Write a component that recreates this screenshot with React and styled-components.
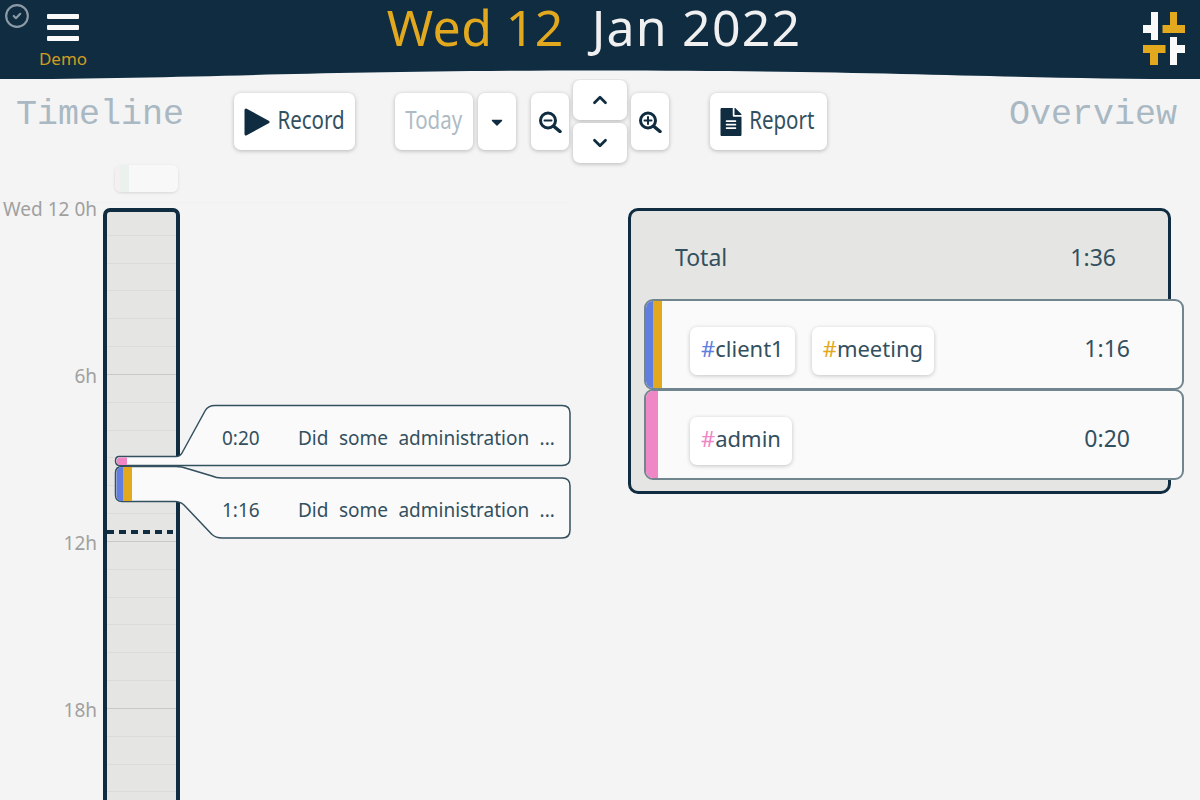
import React from "react";
import styled, { createGlobalStyle } from "styled-components";
import { CircleCheck, ChevronUp, ChevronDown } from "lucide-react";
import { FaCaretDown, FaFileAlt } from "react-icons/fa";

const navy = "#0f2c40";
const gold = "#e2a91f";
const blue = "#5f7ee0";
const pink = "#ef86c6";
const ink = "#33505f";
const sans = `"Noto Sans", "Open Sans", sans-serif`;

const GlobalStyle = createGlobalStyle`
  html, body {
    margin: 0;
    height: 100%;
    background: #f4f4f4;
    font-family: ${sans};
    overflow: hidden;
  }
`;

const Page = styled.div`
  width: 1200px;
  height: 800px;
  overflow: hidden;
`;

const Header = styled.header`
  position: relative;
  height: 79px;
  background: ${navy};
  display: flex;
  justify-content: center;
`;

const Wave = styled.svg`
  position: absolute;
  left: 0;
  bottom: 0;
  width: 1200px;
  height: 10px;
`;

const StatusIcon = styled.span`
  position: absolute;
  left: 4px;
  top: 3px;
  color: #8b9aa5;
  display: flex;
`;

const Menu = styled.div`
  position: absolute;
  left: 39px;
  top: 14px;
  width: 48px;
  display: flex;
  flex-direction: column;
  align-items: center;
`;

const MenuBar = styled.span`
  display: block;
  width: 32px;
  height: 5px;
  margin-bottom: 6px;
  background: #fafafa;
  border-radius: 1px;
`;

const DemoLabel = styled.span`
  margin-top: 1px;
  color: ${gold};
  font-size: 17px;
  line-height: 22px;
  opacity: 0.9;
`;

const Title = styled.h1`
  margin: 0;
  padding-right: 12px;
  font-size: 50px;
  font-weight: 400;
  line-height: 54px;
  letter-spacing: 0.4px;
  color: #f0f0f0;
  display: flex;
  gap: 28px;
`;

const TitleDay = styled.span`
  color: ${gold};
`;

const TitleMonth = styled.span`
  letter-spacing: 1.2px;
`;

const Logo = styled.svg`
  position: absolute;
  right: 15px;
  top: 12px;
  width: 42px;
  height: 53px;
`;

const Toolbar = styled.div`
  height: 83px;
  padding: 1px 23px 0 16px;
  display: flex;
  align-items: center;
`;

const SectionTitle = styled.span`
  font-family: "Liberation Mono", "DejaVu Sans Mono", monospace;
  font-size: 35px;
  line-height: 40px;
  color: #a9b8c2;
  margin-bottom: 14px;
  margin-left: ${p => p.$push || 0};
`;

const ToolButton = styled.button`
  height: ${p => p.$short ? "40px" : "57px"};
  width: ${p => p.$width};
  margin-left: ${p => p.$left || 0};
  padding: 0 ${p => p.$endPad || 0} 0 0;
  border: 0;
  border-radius: 7px;
  background: #fff;
  color: ${p => p.$muted ? "#aebbc4" : navy};
  box-shadow: 0 1px 4px rgba(0, 0, 0, 0.25);
  display: flex;
  align-items: center;
  justify-content: center;
  gap: ${p => p.$gap || "6px"};
  font-family: ${sans};
`;

const ButtonLabel = styled.span`
  display: inline-block;
  font-size: 25px;
  line-height: 30px;
  color: ${p => p.$muted ? "#aebbc4" : ink};
  transform: scaleX(0.82);
  margin: -6px -6px 0;
`;

const NavStack = styled.div`
  margin: 0 4px;
  display: flex;
  flex-direction: column;
  gap: 3px;
`;

const Main = styled.main`
  display: flex;
  align-items: flex-start;
`;

const TimelineColumn = styled.section`
  width: 570px;
  flex: none;
`;

const GhostRow = styled.div`
  height: 40px;
  padding: 2px 0 0 115px;
  box-sizing: border-box;
  border-bottom: 1px solid #f0f0f0;
`;

const GhostButton = styled.div`
  width: 63px;
  height: 27px;
  border-radius: 6px;
  background: linear-gradient(90deg, #f6eef2 0 8%, #ebf1ed 8% 22%, #f8f8f8 22%);
  box-shadow: 0 1px 3px rgba(0, 0, 0, 0.12);
`;

const TimelineBody = styled.div`
  margin-top: 5px;
  display: flex;
`;

const Axis = styled.div`
  width: 97px;
  margin: -11px 6px 0 0;
  flex: none;
`;

const AxisLabel = styled.div`
  height: 167px;
  font-size: 19px;
  line-height: 24px;
  color: #a0a0a0;
  text-align: right;
  white-space: nowrap;
`;

const Rail = styled.div`
  position: relative;
  width: 69px;
  height: 700px;
  flex: none;
  background: #e5e5e3;
  border: 4px solid ${navy};
  border-bottom: 0;
  border-radius: 7px 7px 0 0;
`;

const HourLine = styled.div`
  height: 27.83px;
  margin-top: ${p => p.$first ? "-4px" : 0};
  box-sizing: border-box;
  border-bottom: 1px solid ${p => p.$major ? "#c9c9c7" : "#dcdcda"};
`;

const NowMarker = styled.div`
  position: absolute;
  left: 0;
  right: 3px;
  top: 318px;
  height: 4px;
  background: repeating-linear-gradient(90deg, ${navy} 0 7px, transparent 7px 12px);
`;

const Callout = styled.div`
  position: absolute;
  left: 7px;
  top: ${p => p.$top};
  width: 458px;
  height: ${p => p.$height};
`;

const CalloutShape = styled.svg`
  position: absolute;
  inset: 0;
  width: 100%;
  height: 100%;
`;

const CalloutText = styled.div`
  position: absolute;
  left: 108px;
  top: ${p => p.$top};
  display: flex;
  font-size: 19px;
  line-height: 26px;
  color: ${ink};
  white-space: nowrap;
`;

const CalloutTime = styled.span`
  width: 76px;
`;

const CalloutNote = styled.span`
  word-spacing: 5.5px;
`;

const TotalsPanel = styled.section`
  width: 537px;
  height: 280px;
  margin: 45px 0 0 58px;
  flex: none;
  background: #e5e5e3;
  border: 3px solid ${navy};
  border-radius: 10px;
`;

const TotalRow = styled.div`
  height: 84px;
  padding: 4px 52px 0 44px;
  display: flex;
  align-items: center;
  justify-content: space-between;
  font-size: 23px;
  color: ${ink};
`;

const TagRow = styled.div`
  position: relative;
  width: 540px;
  height: 91px;
  margin-left: 13px;
  padding: 0 52px 0 44px;
  box-sizing: border-box;
  display: flex;
  align-items: center;
  gap: 17px;
  overflow: hidden;
  background: #fafafa;
  border: 2px solid #71858f;
  border-radius: 9px;
  font-size: 23px;
  color: ${ink};

  & + & {
    margin-top: -1px;
  }
`;

const ColorBars = styled.div`
  position: absolute;
  left: 0;
  top: 0;
  bottom: 0;
  display: flex;
`;

const ColorBar = styled.span`
  width: ${p => p.$width};
  background: ${p => p.$color};
`;

const Tag = styled.span`
  height: 48px;
  margin-top: 12px;
  padding: 0 11px 6px;
  box-sizing: border-box;
  display: flex;
  align-items: center;
  background: #fff;
  border-radius: 7px;
  box-shadow: 0 1px 4px rgba(0, 0, 0, 0.22);
  font-size: 22px;
`;

const TagHash = styled.span`
  color: ${p => p.$color};
`;

const RowTime = styled.span`
  margin: 7px 0 0 auto;
`;

// lens with a thick rim, the sign inside is short
const ZoomGlyph = ({ plus }) => (
  <svg width="24" height="22" viewBox="0 0 24 22" fill="none" stroke={navy} strokeLinecap="round">
    <circle cx="10" cy="9.500" r="7.500" strokeWidth="3" />
    <path strokeWidth="3.500" d="M16 15.500L22 20.500" />
    <path strokeWidth="2" d={plus ? "M6.500 9.500H13.500M10 6V13" : "M6.500 9.500H13.500"} />
  </svg>
);

const hours = Array.from({ length: 26 }, (_, i) => i);
const rows = [
  { bars: [[blue, "7px"], [gold, "9px"]], tags: [["client1", blue], ["meeting", gold]], time: "1:16" },
  { bars: [[pink, "12px"]], tags: [["admin", pink]], time: "0:20" }
];

export default function App() {
  return (
    <Page>
      <GlobalStyle />
      <Header>
        <StatusIcon><CircleCheck size={26} strokeWidth={2} /></StatusIcon>
        <Menu>
          <MenuBar />
          <MenuBar />
          <MenuBar />
          <DemoLabel>Demo</DemoLabel>
        </Menu>
        <Title>
          <TitleDay>Wed 12</TitleDay>
          <TitleMonth>Jan 2022</TitleMonth>
        </Title>
        <Logo viewBox="1143 12 42 53">
          <path fill="#fafafa" d="M1151 12h7v28h-7V33h-8v-8h8zM1170 37h7v8h8v8h-8v12h-7z" />
          <path fill={gold} d="M1170 12h7v13h8v8h-22.500v-8h7.500zM1143 45h22.500v8H1158v12h-8V53h-7z" />
        </Logo>
        <Wave viewBox="0 0 1200 10" preserveAspectRatio="none">
          <path fill="#f4f4f4" d="M0 10C200 10 300 1.500 600 1.500C900 1.500 1000 10 1200 10Z" />
        </Wave>
      </Header>

      <Toolbar>
        <SectionTitle>Timeline</SectionTitle>
        <ToolButton $width="121px" $left="50px">
          <svg width="26" height="28" viewBox="0 0 26 28">
            <path fill={navy} stroke={navy} strokeWidth="3" strokeLinejoin="round" d="M2 2L24 14L2 26Z" />
          </svg>
          <ButtonLabel>Record</ButtonLabel>
        </ToolButton>
        <ToolButton $width="78px" $left="40px" $muted><ButtonLabel $muted>Today</ButtonLabel></ToolButton>
        <ToolButton $width="38px" $left="5px"><FaCaretDown size={18} /></ToolButton>
        <ToolButton $width="38px" $left="15px"><ZoomGlyph /></ToolButton>
        <NavStack>
          <ToolButton $short $width="54px"><ChevronUp size={22} strokeWidth={3} /></ToolButton>
          <ToolButton $short $width="54px"><ChevronDown size={22} strokeWidth={3} /></ToolButton>
        </NavStack>
        <ToolButton $width="38px"><ZoomGlyph plus /></ToolButton>
        <ToolButton $width="117px" $left="41px" $gap="3px" $endPad="4px">
          <FaFileAlt size={28} />
          <ButtonLabel>Report</ButtonLabel>
        </ToolButton>
        <SectionTitle $push="auto">Overview</SectionTitle>
      </Toolbar>

      <Main>
        <TimelineColumn>
          <GhostRow><GhostButton /></GhostRow>
          <TimelineBody>
            <Axis>
              <AxisLabel>Wed 12 0h</AxisLabel>
              <AxisLabel>6h</AxisLabel>
              <AxisLabel>12h</AxisLabel>
              <AxisLabel>18h</AxisLabel>
            </Axis>
            <Rail>
              {hours.map(h => (
                <HourLine key={h} $first={h === 0} $major={(h + 1) % 6 === 0} />
              ))}
              <NowMarker />
              <Callout $top="192px" $height="63px">
                <CalloutShape viewBox="114 404 458 63">
                  <path
                    fill="#fafafa"
                    stroke={ink}
                    strokeWidth="1.500"
                    d="M119 456.500H176Q180 456.500 182 453L205 411Q208 405.500 215 405.500H562Q570 405.500 570 413V458Q570 465.500 562 465.500H120Q115.500 465.500 115.500 461Q115.500 456.500 119 456.500Z"
                  />
                  <path fill={pink} d="M127 457.500V465H120Q116.500 465 116.500 461Q116.500 457.500 120 457.500Z" />
                </CalloutShape>
                <CalloutText $top="21px">
                  <CalloutTime>0:20</CalloutTime>
                  <CalloutNote>Did some administration ...</CalloutNote>
                </CalloutText>
              </Callout>
              <Callout $top="253px" $height="76px">
                <CalloutShape viewBox="114 465 458 76">
                  <path
                    fill="#fafafa"
                    stroke={ink}
                    strokeWidth="1.500"
                    d="M122 466.500H176Q182 466.500 187 468.500L212 476Q216 478 222 478H562Q570 478 570 486V530Q570 538 562 538H222Q216 538 212 534.500L184 505Q180 501.500 175 501.500H122Q115.500 501.500 115.500 495V473Q115.500 466.500 122 466.500Z"
                  />
                  <path fill={blue} d="M123 467V501H122Q116.500 501 116.500 495V473Q116.500 467 122 467Z" />
                  <rect fill={gold} x="123" y="467" width="9" height="34" />
                </CalloutShape>
                <CalloutText $top="32px">
                  <CalloutTime>1:16</CalloutTime>
                  <CalloutNote>Did some administration ...</CalloutNote>
                </CalloutText>
              </Callout>
            </Rail>
          </TimelineBody>
        </TimelineColumn>

        <TotalsPanel>
          <TotalRow>
            <span>Total</span>
            <span>1:36</span>
          </TotalRow>
          {rows.map(row => (
            <TagRow key={row.time}>
              <ColorBars>
                {row.bars.map(([color, width]) => (
                  <ColorBar key={color} $color={color} $width={width} />
                ))}
              </ColorBars>
              {row.tags.map(([name, color]) => (
                <Tag key={name}><TagHash $color={color}>#</TagHash>{name}</Tag>
              ))}
              <RowTime>{row.time}</RowTime>
            </TagRow>
          ))}
        </TotalsPanel>
      </Main>
    </Page>
  );
}
